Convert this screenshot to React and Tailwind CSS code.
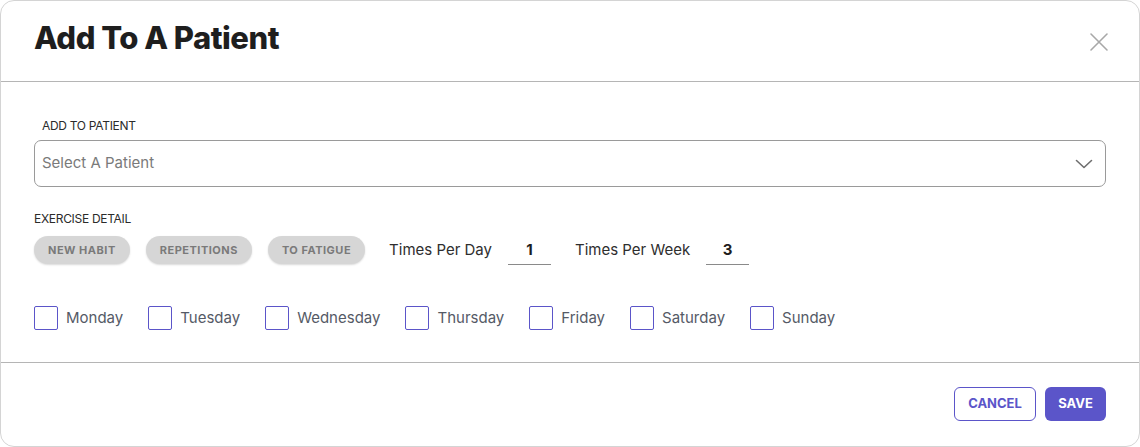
const days = ["Monday", "Tuesday", "Wednesday", "Thursday", "Friday", "Saturday", "Sunday"];
const pills = ["NEW HABIT", "REPETITIONS", "TO FATIGUE"];

export default function App() {
  return (
    <div className="w-[1140px] h-[447px] bg-white font-['Inter','Noto_Sans',sans-serif]">
      <div className="flex h-full w-full flex-col rounded-[14px] border border-[#d4d4d4]">
        {/* Header */}
        <div className="flex h-[81px] items-center justify-between border-b border-[#b5b5b5] pl-[33px] pr-[30px]">
          <h1 className="pb-[6px] text-[31px] font-extrabold tracking-[-0.5px] text-[#1e1e1e]">Add To A Patient</h1>
          <svg width="20" height="20" viewBox="0 0 20 20" className="mt-[1px]">
            <path d="M2 2 L18 18 M18 2 L2 18" stroke="#a8a8a8" strokeWidth="1.6" strokeLinecap="round" />
          </svg>
        </div>

        {/* Body */}
        <div className="flex flex-col border-b border-[#b5b5b5] px-[33px] pt-[37px] pb-[32px]">
          <div className="pl-[8px] text-[12px] leading-[14px] tracking-[-0.3px] text-[#2b2b2b]">ADD TO PATIENT</div>
          <div className="mt-[7px] flex h-[47px] items-center justify-between rounded-[7px] border border-[#9a9a9a] pl-[7px] pr-[12px]">
            <span className="text-[15px] text-[#7a7a7a]">Select A Patient</span>
            <svg width="18" height="10" viewBox="0 0 18 10">
              <path d="M1.5 1.5 L9 8.5 L16.5 1.5" fill="none" stroke="#6e6e6e" strokeWidth="1.6" strokeLinecap="round" strokeLinejoin="round" />
            </svg>
          </div>

          <div className="mt-[25px] text-[12px] leading-[14px] tracking-[-0.3px] text-[#2b2b2b]">EXERCISE DETAIL</div>
          <div className="mt-[9px] flex items-center">
            {pills.map((p) => (
              <span
                key={p}
                className="mr-[16px] flex h-[28px] items-center rounded-full bg-[#d6d6d6] px-[14px] text-[11px] font-bold tracking-[0.5px] text-[#7a7a7a] shadow-[0_1px_2px_rgba(0,0,0,0.15)]"
              >
                {p}
              </span>
            ))}
            <span className="ml-[8px] text-[15px] text-[#2e2e2e]">Times Per Day</span>
            <span className="ml-[16px] flex h-[30px] w-[43px] items-center justify-center border-b border-[#8a8a8a] pt-[1px] text-[15px] font-bold text-[#1e1e1e]">1</span>
            <span className="ml-[24px] text-[15px] text-[#2e2e2e]">Times Per Week</span>
            <span className="ml-[16px] flex h-[30px] w-[43px] items-center justify-center border-b border-[#8a8a8a] pt-[1px] text-[15px] font-bold text-[#1e1e1e]">3</span>
          </div>

          <div className="mt-[41px] flex items-center gap-[25px]">
            {days.map((d) => (
              <label key={d} className="flex items-center gap-[8px]">
                <span className="h-[24px] w-[24px] rounded-[2px] border border-[#5b55c9] bg-white" />
                <span className="text-[15px] text-[#555a66]">{d}</span>
              </label>
            ))}
          </div>
        </div>

        {/* Footer */}
        <div className="flex flex-1 items-start justify-end gap-[9px] px-[33px] pt-[24px]">
          <button className="h-[34px] w-[82px] rounded-[6px] border border-[#5b55c9] bg-white text-[13px] font-bold text-[#5b55c9]">CANCEL</button>
          <button className="h-[34px] w-[61px] rounded-[6px] bg-[#5b55c9] text-[13px] font-bold text-white">SAVE</button>
        </div>
      </div>
    </div>
  );
}
